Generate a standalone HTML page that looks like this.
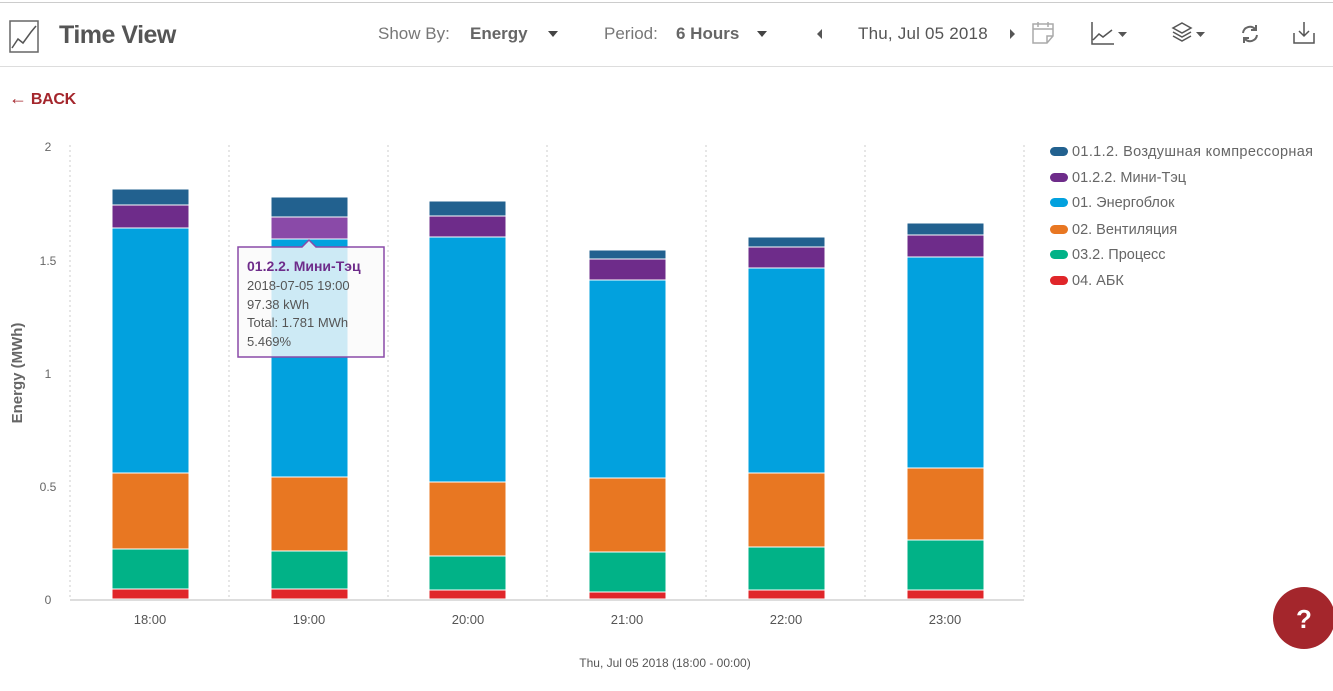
<!DOCTYPE html>
<html><head><meta charset="utf-8"><style>
body{margin:0;width:1333px;height:691px;background:#fff;font-family:"Liberation Sans","Noto Sans CJK SC",sans-serif;position:relative;overflow:hidden;color:#555}
.a{position:absolute;white-space:nowrap}
</style></head><body>
<div class="a" style="left:0;top:2px;width:1333px;height:1px;background:#ccc"></div>
<div class="a" style="left:0;top:66px;width:1333px;height:1px;background:#ddd"></div>
<svg class="a" style="left:9px;top:20px" width="30" height="33" viewBox="0 0 30 33"><rect x="1" y="1" width="28" height="31" fill="none" stroke="#666" stroke-width="1.5"/><polyline points="3,28 9,19 14,23 22,12 27,6" fill="none" stroke="#555" stroke-width="1.5"/></svg>
<div class="a" style="left:59px;top:21px;font-size:25px;font-weight:bold;color:#555;letter-spacing:-0.5px">Time View</div>
<div class="a" style="left:378px;top:24px;font-size:17px;color:#777">Show By:</div>
<div class="a" style="left:470px;top:24px;font-size:17px;font-weight:bold;color:#666">Energy</div>
<div class="a" style="left:548px;top:31px;border:5px solid transparent;border-top:6px solid #444;border-bottom:0"></div>
<div class="a" style="left:604px;top:24px;font-size:17px;color:#777">Period:</div>
<div class="a" style="left:676px;top:24px;font-size:17px;font-weight:bold;color:#666">6 Hours</div>
<div class="a" style="left:757px;top:31px;border:5px solid transparent;border-top:6px solid #444;border-bottom:0"></div>
<div class="a" style="left:817px;top:29px;border:5px solid transparent;border-right:5px solid #555;border-left:0"></div>
<div class="a" style="left:858px;top:24px;font-size:17px;color:#555;letter-spacing:0.2px">Thu, Jul 05 2018</div>
<div class="a" style="left:1010px;top:29px;border:5px solid transparent;border-left:5px solid #555;border-right:0"></div>
<svg class="a" style="left:1030px;top:20px" width="26" height="26" viewBox="0 0 26 26" fill="none" stroke="#aaa" stroke-width="1.5"><path d="M3 4h20v12l-6 7H3z M17 23v-7h6 M3 9h20 M8 2v5 M18 2v5"/></svg>
<svg class="a" style="left:1088px;top:20px" width="42" height="26" viewBox="0 0 42 26" fill="none" stroke="#555" stroke-width="1.5"><path d="M4 2v22h22 M5 20l6-6 4 3 9-7"/><path d="M30 12h9l-4.5 5z" fill="#555" stroke="none"/></svg>
<svg class="a" style="left:1170px;top:20px" width="40" height="26" viewBox="0 0 40 26" fill="none" stroke="#555" stroke-width="1.5"><path d="M12 3l9 5-9 5-9-5z M3 12l9 5 9-5 M3 16l9 5 9-5"/><path d="M26 12h9l-4.5 5z" fill="#555" stroke="none"/></svg>
<svg class="a" style="left:1239px;top:23px" width="22" height="22" viewBox="0 0 22 22" fill="none" stroke="#666" stroke-width="2"><path d="M4 10a7 7 0 0 1 12-4 M18 12a7 7 0 0 1-12 4"/><path d="M17 2v5h-5 M5 20v-5h5"/></svg>
<svg class="a" style="left:1292px;top:20px" width="24" height="26" viewBox="0 0 24 26" fill="none" stroke="#555" stroke-width="1.5"><path d="M2 13v10h20V13 M12 2v14 M7 11l5 5 5-5"/></svg>
<div class="a" style="left:9px;top:88px;font-size:16px;font-weight:bold;color:#a4262c;letter-spacing:-0.3px"><span style="font-weight:normal;font-size:18px">←</span> BACK</div>

<svg class="a" style="left:0;top:0" width="1333" height="691">
<g font-size="12" fill="#666" text-anchor="middle">
<text x="48" y="151">2</text><text x="48" y="265">1.5</text><text x="48" y="378">1</text><text x="48" y="491">0.5</text><text x="48" y="604">0</text>
</g>
<text x="22" y="373" font-size="15" fill="#666" font-weight="bold" transform="rotate(-90 22 373)" text-anchor="middle">Energy (MWh)</text>
<g stroke="#ccc" stroke-dasharray="2,3">
<line x1="70" y1="145" x2="70" y2="600"/><line x1="229" y1="145" x2="229" y2="600"/><line x1="388" y1="145" x2="388" y2="600"/><line x1="547" y1="145" x2="547" y2="600"/><line x1="706" y1="145" x2="706" y2="600"/><line x1="865" y1="145" x2="865" y2="600"/><line x1="1024" y1="145" x2="1024" y2="600"/>
</g>
<line x1="70" y1="600" x2="1024" y2="600" stroke="#bbb"/>
<g stroke="#fff" stroke-width="1">
<rect x="112" y="189" width="77" height="16" fill="#22618f"/><rect x="112" y="205" width="77" height="23" fill="#6e2c8a"/><rect x="112" y="228" width="77" height="245" fill="#02a1de"/><rect x="112" y="473" width="77" height="76" fill="#e87722"/><rect x="112" y="549" width="77" height="40" fill="#01b287"/><rect x="112" y="589" width="77" height="10" fill="#e0262a"/>
<rect x="271" y="197" width="77" height="20" fill="#22618f"/><rect x="271" y="217" width="77" height="22" fill="#8a4aa8"/><rect x="271" y="239" width="77" height="238" fill="#02a1de"/><rect x="271" y="477" width="77" height="74" fill="#e87722"/><rect x="271" y="551" width="77" height="38" fill="#01b287"/><rect x="271" y="589" width="77" height="10" fill="#e0262a"/>
<rect x="429" y="201" width="77" height="15" fill="#22618f"/><rect x="429" y="216" width="77" height="21" fill="#6e2c8a"/><rect x="429" y="237" width="77" height="245" fill="#02a1de"/><rect x="429" y="482" width="77" height="74" fill="#e87722"/><rect x="429" y="556" width="77" height="34" fill="#01b287"/><rect x="429" y="590" width="77" height="9" fill="#e0262a"/>
<rect x="589" y="250" width="77" height="9" fill="#22618f"/><rect x="589" y="259" width="77" height="21" fill="#6e2c8a"/><rect x="589" y="280" width="77" height="198" fill="#02a1de"/><rect x="589" y="478" width="77" height="74" fill="#e87722"/><rect x="589" y="552" width="77" height="40" fill="#01b287"/><rect x="589" y="592" width="77" height="7" fill="#e0262a"/>
<rect x="748" y="237" width="77" height="10" fill="#22618f"/><rect x="748" y="247" width="77" height="21" fill="#6e2c8a"/><rect x="748" y="268" width="77" height="205" fill="#02a1de"/><rect x="748" y="473" width="77" height="74" fill="#e87722"/><rect x="748" y="547" width="77" height="43" fill="#01b287"/><rect x="748" y="590" width="77" height="9" fill="#e0262a"/>
<rect x="907" y="223" width="77" height="12" fill="#22618f"/><rect x="907" y="235" width="77" height="22" fill="#6e2c8a"/><rect x="907" y="257" width="77" height="211" fill="#02a1de"/><rect x="907" y="468" width="77" height="72" fill="#e87722"/><rect x="907" y="540" width="77" height="50" fill="#01b287"/><rect x="907" y="590" width="77" height="9" fill="#e0262a"/>
</g>
<g font-size="13" fill="#555" text-anchor="middle">
<text x="150" y="624">18:00</text><text x="309" y="624">19:00</text><text x="468" y="624">20:00</text><text x="627" y="624">21:00</text><text x="786" y="624">22:00</text><text x="945" y="624">23:00</text>
<text x="665" y="667" font-size="12">Thu, Jul 05 2018 (18:00 - 00:00)</text>
</g>
<path d="M238 247H302L309 240L316 247H384V357H238Z" fill="rgba(250,250,250,0.82)" stroke="#8a4aa8" stroke-width="1.5"/>
<g font-size="13" fill="#555">
<text x="247" y="271" font-weight="bold" fill="#6e2c8a" font-size="14">01.2.2. Мини-Тэц</text>
<text x="247" y="290">2018-07-05 19:00</text><text x="247" y="309">97.38 kWh</text><text x="247" y="327">Total: 1.781 MWh</text><text x="247" y="346">5.469%</text>
</g>
<g font-size="14.5" fill="#666">
<rect x="1050" y="147" width="18" height="9" rx="4.5" fill="#22618f"/><text x="1072" y="156" textLength="241">01.1.2. Воздушная компрессорная</text>
<rect x="1050" y="173" width="18" height="9" rx="4.5" fill="#6e2c8a"/><text x="1072" y="182">01.2.2. Мини-Тэц</text>
<rect x="1050" y="198" width="18" height="9" rx="4.5" fill="#02a1de"/><text x="1072" y="207">01. Энергоблок</text>
<rect x="1050" y="225" width="18" height="9" rx="4.5" fill="#e87722"/><text x="1072" y="234">02. Вентиляция</text>
<rect x="1050" y="250" width="18" height="9" rx="4.5" fill="#01b287"/><text x="1072" y="259">03.2. Процесс</text>
<rect x="1050" y="276" width="18" height="9" rx="4.5" fill="#e0262a"/><text x="1072" y="285">04. АБК</text>
</g>
<circle cx="1304" cy="618" r="31" fill="#a4262c"/>
<text x="1304" y="628" font-size="26" font-weight="bold" fill="#fff" text-anchor="middle">?</text>
</svg>
</body></html>
